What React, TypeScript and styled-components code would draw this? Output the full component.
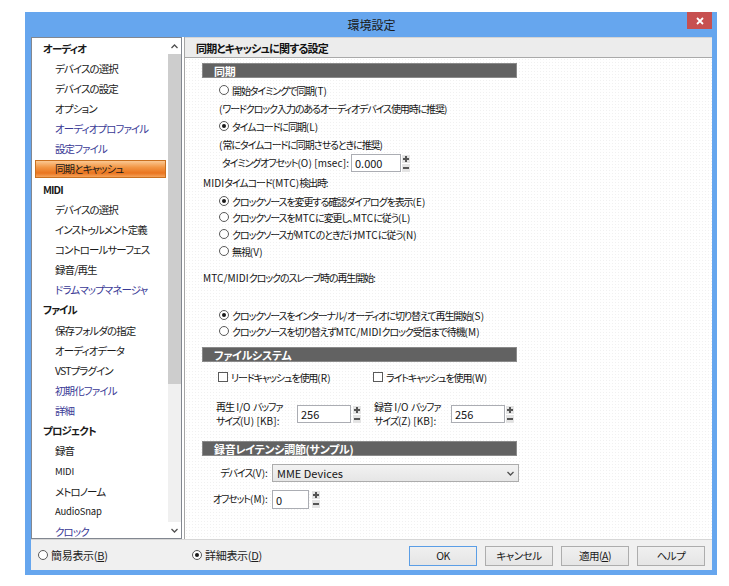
import React from 'react'
import styled, { createGlobalStyle } from 'styled-components'

const FONT = `"Noto Sans CJK JP", "Noto Sans", sans-serif`

const GlobalStyle = createGlobalStyle`
  html, body {
    margin: 0;
    padding: 0;
    background: #ffffff;
  }
  body {
    font-family: ${FONT};
    font-size: 11px;
    color: #1e1e1e;
    font-feature-settings: "palt";
    letter-spacing: -0.3px;
  }
`

const Page = styled.div`
  padding: 12px 0 0 25px;
`

const Window = styled.div`
  position: relative;
  width: 692px;
  height: 563px;
  box-sizing: border-box;
  background: #66a6ee;
  padding: 0 5px 5px 6px;
  display: flex;
  flex-direction: column;
`

const TitleBar = styled.div`
  height: 25px;
  display: flex;
  align-items: center;
  justify-content: center;
  font-size: 12px;
  color: #1a1a1a;
  letter-spacing: 0;
`

const CloseButton = styled.div`
  position: absolute;
  top: 0;
  right: 5px;
  width: 25px;
  height: 17px;
  background: #c75050;
  display: flex;
  align-items: center;
  justify-content: center;
`

const Client = styled.div`
  flex: 1;
  display: flex;
  flex-direction: column;
  background: #f0f0f0;
`

const Main = styled.div`
  height: 502px;
  display: flex;
  background: #ffffff;
`

const Sidebar = styled.div`
  width: 151px;
  box-sizing: border-box;
  border: 1px solid #828790;
  display: flex;
  overflow: hidden;
`

const NavList = styled.div`
  flex: 1;
  overflow: hidden;
`

type ItemProps = { $kind: 'head' | 'item' | 'link' | 'small'; $selected?: boolean }

const NavItem = styled.div`
  height: 20.15px;
  box-sizing: border-box;
  padding: 1px 2px 1px 3px;
`

const NavLabel = styled.div<ItemProps>`
  height: 100%;
  box-sizing: border-box;
  display: flex;
  align-items: center;
  padding-left: ${p => (p.$kind === 'head' ? 7 : 19)}px;
  font-weight: ${p => (p.$kind === 'head' ? 700 : 400)};
  font-size: ${p => (p.$kind === 'small' ? 9.5 : 10.5)}px;
  letter-spacing: ${p => (p.$kind === 'small' ? -0.2 : -0.9)}px;
  color: ${p => (p.$kind === 'link' ? '#3a3a96' : '#1a1a1a')};
  white-space: nowrap;
  border: 1px solid ${p => (p.$selected ? '#c9701f' : 'transparent')};
  background: ${p =>
    p.$selected
      ? 'linear-gradient(#fbc892 0%, #f29644 40%, #ea741f 75%, #f5a25a 100%)'
      : 'transparent'};
`

const ScrollBar = styled.div`
  width: 13px;
  display: flex;
  flex-direction: column;
  background: #f0f0f0;
`

const ScrollArrow = styled.div`
  height: 16px;
  display: flex;
  align-items: center;
  justify-content: center;
  background: #ffffff;
`

const ScrollThumb = styled.div`
  height: 330px;
  background: #cdcdcd;
`

const ScrollTrack = styled.div`
  flex: 1;
`

const Panel = styled.div`
  flex: 1;
  margin-left: 2px;
  border-left: 1px solid #a5a5a5;
  display: flex;
  flex-direction: column;
  background-color: #ffffff;
  background-image: radial-gradient(circle, #f1f1f1 0.7px, transparent 0.9px);
  background-size: 3px 3px;
`

const PanelHeader = styled.div`
  height: 21px;
  box-sizing: border-box;
  border-top: 1px solid #d4d4d4;
  border-bottom: 1px solid #a9a9a9;
  background: #ececec;
  display: flex;
  align-items: center;
  padding-left: 11px;
  font-size: 11px;
  letter-spacing: -0.8px;
  font-weight: 700;
  color: #111;
`

const Content = styled.div`
  padding-left: 17px;
  display: flex;
  flex-direction: column;
  font-size: 10px;
  letter-spacing: -1.1px;
  color: #141414;
`

const Latin = styled.span`
  letter-spacing: 0.1px;
`

const SectionBar = styled.div<{ $mt: number }>`
  margin-top: ${p => p.$mt}px;
  width: 315px;
  height: 15px;
  box-sizing: border-box;
  background: #626262;
  border: 1px solid #8a8a8a;
  color: #ffffff;
  font-weight: 700;
  font-size: 11px;
  letter-spacing: -0.3px;
  padding-left: 11px;
  display: flex;
  align-items: center;
`

const Row = styled.div<{ $h: number; $mt?: number; $in?: number }>`
  height: ${p => p.$h}px;
  margin-top: ${p => p.$mt ?? 0}px;
  padding-left: ${p => p.$in ?? 17}px;
  display: flex;
  align-items: center;
  white-space: nowrap;
`

const Option = styled.label<{ $w?: number }>`
  display: flex;
  align-items: center;
  gap: 3px;
  width: ${p => (p.$w ? `${p.$w}px` : 'auto')};
`

const RadioDot = styled.span<{ $on?: boolean }>`
  width: 10px;
  height: 10px;
  box-sizing: border-box;
  border-radius: 50%;
  border: 1px solid #5a5a5a;
  background: #ffffff;
  display: inline-flex;
  align-items: center;
  justify-content: center;
  flex-shrink: 0;
  &::after {
    content: '';
    width: 4px;
    height: 4px;
    border-radius: 50%;
    background: ${p => (p.$on ? '#1a1a1a' : 'transparent')};
  }
`

const CheckBox = styled.span`
  width: 10px;
  height: 10px;
  box-sizing: border-box;
  border: 1px solid #5a5a5a;
  background: #ffffff;
  flex-shrink: 0;
`

const FieldLabel = styled.div<{ $w: number; $right?: boolean; $ml?: number }>`
  width: ${p => p.$w}px;
  margin-left: ${p => p.$ml ?? 0}px;
  flex-shrink: 0;
  display: flex;
  flex-direction: column;
  align-items: ${p => (p.$right ? 'flex-end' : 'flex-start')};
  white-space: pre;
`

const LabelLine = styled.div`
  height: 14.5px;
  line-height: 14.5px;
  display: flex;
`

const TextBox = styled.div<{ $w: number; $h?: number; $ml?: number }>`
  width: ${p => p.$w}px;
  height: ${p => p.$h ?? 18}px;
  margin-left: ${p => p.$ml ?? 0}px;
  box-sizing: border-box;
  border: 1px solid #abadb3;
  background: #ffffff;
  padding-left: 3px;
  display: flex;
  align-items: center;
  font-size: 11px;
  letter-spacing: 0;
`

const Spin = styled.div<{ $ml: number }>`
  margin-left: ${p => p.$ml}px;
  width: 8px;
  height: 17px;
  display: flex;
  flex-direction: column;
  gap: 1px;
`

const SpinHalf = styled.div`
  flex: 1;
  background: #e4e4e4;
  display: flex;
  align-items: center;
  justify-content: center;
`

const Select = styled.div`
  margin-left: 4px;
  width: 247px;
  height: 18px;
  box-sizing: border-box;
  border: 1px solid #acacac;
  background: linear-gradient(#f2f2f2, #e6e6e6);
  display: flex;
  align-items: center;
  justify-content: space-between;
  padding: 0 4px 0 4px;
  font-size: 11px;
  letter-spacing: 0;
`

const Footer = styled.div`
  flex: 1;
  border-top: 1px solid #d6d6d6;
  display: flex;
  align-items: center;
  padding: 0 7px 0 7px;
`

const ButtonGroup = styled.div`
  margin-left: auto;
  display: flex;
  gap: 8px;
  padding-top: 1px;
`

const Button = styled.div<{ $default?: boolean }>`
  width: 68px;
  height: 20px;
  box-sizing: border-box;
  border: 1px solid ${p => (p.$default ? '#5b9ee6' : '#adadad')};
  background: linear-gradient(#f0f0f0, #e5e5e5);
  display: flex;
  align-items: center;
  justify-content: center;
  font-size: 10.5px;
  letter-spacing: -0.5px;
  color: #1a1a1a;
`

// ASCII runs keep normal spacing, Japanese runs stay condensed
const Txt = ({ s }: { s: string }) => (
  <>
    {s
      .split(/([\x20-\x7E]+)/)
      .filter(Boolean)
      .map((part, i) => (/^[\x20-\x7E]+$/.test(part) ? <Latin key={i}>{part}</Latin> : <span key={i}>{part}</span>))}
  </>
)

const Plus = () => (
  <svg width="6" height="6" viewBox="0 0 6 6">
    <rect x="0" y="2" width="6" height="2" fill="#555" />
    <rect x="2" y="0" width="2" height="6" fill="#555" />
  </svg>
)

const Minus = () => (
  <svg width="6" height="6" viewBox="0 0 6 6">
    <rect x="0" y="2" width="6" height="2" fill="#555" />
  </svg>
)

const Spinner = ({ ml }: { ml: number }) => (
  <Spin $ml={ml}>
    <SpinHalf>
      <Plus />
    </SpinHalf>
    <SpinHalf>
      <Minus />
    </SpinHalf>
  </Spin>
)

const Radio = ({ on, children, w }: { on?: boolean; children: React.ReactNode; w?: number }) => (
  <Option $w={w}>
    <RadioDot $on={on} />
    <span>{typeof children === 'string' ? <Txt s={children} /> : children}</span>
  </Option>
)

const Check = ({ children, w }: { children: string; w?: number }) => (
  <Option $w={w}>
    <CheckBox />
    <span>
      <Txt s={children} />
    </span>
  </Option>
)

const Label = ({ lines, w, right, ml }: { lines: string[]; w: number; right?: boolean; ml?: number }) => (
  <FieldLabel $w={w} $right={right} $ml={ml}>
    {lines.map(line => (
      <LabelLine key={line}>
        <Txt s={line} />
      </LabelLine>
    ))}
  </FieldLabel>
)

const Chevron = ({ up }: { up?: boolean }) => (
  <svg width="7" height="5" viewBox="0 0 7 5">
    <path
      d={up ? 'M0.5 4 L3.5 1 L6.5 4' : 'M0.5 1 L3.5 4 L6.5 1'}
      fill="none"
      stroke="#505050"
      strokeWidth="1.3"
    />
  </svg>
)

type NavEntry = { label: string; kind: ItemProps['$kind']; selected?: boolean }

const navItems: NavEntry[] = [
  { label: 'オーディオ', kind: 'head' },
  { label: 'デバイスの選択', kind: 'item' },
  { label: 'デバイスの設定', kind: 'item' },
  { label: 'オプション', kind: 'item' },
  { label: 'オーディオプロファイル', kind: 'link' },
  { label: '設定ファイル', kind: 'link' },
  { label: '同期とキャッシュ', kind: 'item', selected: true },
  { label: 'MIDI', kind: 'head' },
  { label: 'デバイスの選択', kind: 'item' },
  { label: 'インストゥルメント定義', kind: 'item' },
  { label: 'コントロールサーフェス', kind: 'item' },
  { label: '録音/再生', kind: 'item' },
  { label: 'ドラムマップマネージャ', kind: 'link' },
  { label: 'ファイル', kind: 'head' },
  { label: '保存フォルダの指定', kind: 'item' },
  { label: 'オーディオデータ', kind: 'item' },
  { label: 'VSTプラグイン', kind: 'item' },
  { label: '初期化ファイル', kind: 'link' },
  { label: '詳細', kind: 'link' },
  { label: 'プロジェクト', kind: 'head' },
  { label: '録音', kind: 'item' },
  { label: 'MIDI', kind: 'small' },
  { label: 'メトロノーム', kind: 'item' },
  { label: 'AudioSnap', kind: 'small' },
  { label: 'クロック', kind: 'link' },
]

const App = () => {
  return (
    <Page>
      <GlobalStyle />
      <Window>
        <TitleBar>環境設定</TitleBar>
        <CloseButton>
          <svg width="8" height="8" viewBox="0 0 8 8">
            <path d="M1 1 L7 7 M7 1 L1 7" stroke="#ffffff" strokeWidth="1.8" />
          </svg>
        </CloseButton>
        <Client>
          <Main>
            <Sidebar>
              <NavList>
                {navItems.map((item, i) => (
                  <NavItem key={i}>
                    <NavLabel $kind={item.kind} $selected={item.selected}>
                      {item.label}
                    </NavLabel>
                  </NavItem>
                ))}
              </NavList>
              <ScrollBar>
                <ScrollArrow>
                  <Chevron up />
                </ScrollArrow>
                <ScrollThumb />
                <ScrollTrack />
                <ScrollArrow>
                  <Chevron />
                </ScrollArrow>
              </ScrollBar>
            </Sidebar>
            <Panel>
              <PanelHeader>同期とキャッシュに関する設定</PanelHeader>
              <Content>
                <SectionBar $mt={5}>同期</SectionBar>
                <Row $mt={2} $h={20}>
                  <Radio>開始タイミングで同期(T)</Radio>
                </Row>
                <Row $h={16}>
                  <Txt s="(ワードクロック入力のあるオーディオデバイス使用時に推奨)" />
                </Row>
                <Row $h={20}>
                  <Radio on>タイムコードに同期(L)</Radio>
                </Row>
                <Row $h={16}>
                  <Txt s="(常にタイムコードに同期させるときに推奨)" />
                </Row>
                <Row $mt={2} $h={18} $in={20}>
                  <Label w={129} lines={['タイミングオフセット(O) [msec]:']} />
                  <TextBox $w={50}>0.000</TextBox>
                  <Spinner ml={1} />
                </Row>
                <Row $mt={1} $h={18} $in={1}>
                  <Txt s="MIDIタイムコード(MTC)検出時:" />
                </Row>
                <Row $mt={2} $h={16}>
                  <Radio on>クロックソースを変更する確認ダイアログを表示(E)</Radio>
                </Row>
                <Row $h={16}>
                  <Radio>クロックソースをMTCに変更し、MTCに従う(L)</Radio>
                </Row>
                <Row $h={18}>
                  <Radio>クロックソースがMTCのときだけMTCに従う(N)</Radio>
                </Row>
                <Row $h={16}>
                  <Radio>無視(V)</Radio>
                </Row>
                <Row $mt={9} $h={18} $in={1}>
                  <Txt s="MTC/MIDIクロックのスレーブ時の再生開始:" />
                </Row>
                <Row $mt={20} $h={18}>
                  <Radio on>クロックソースをインターナル/オーディオに切り替えて再生開始(S)</Radio>
                </Row>
                <Row $h={14}>
                  <Radio>クロックソースを切り替えずMTC/MIDIクロック受信まで待機(M)</Radio>
                </Row>

                <SectionBar $mt={9}>ファイルシステム</SectionBar>
                <Row $mt={6} $h={18} $in={16}>
                  <Check w={155}>リードキャッシュを使用(R)</Check>
                  <Check>ライトキャッシュを使用(W)</Check>
                </Row>
                <Row $mt={16} $h={24} $in={14}>
                  <Label w={81} lines={['再生 I/O バッファ', 'サイズ(U) [KB]:']} />
                  <TextBox $w={54}>256</TextBox>
                  <Spinner ml={2} />
                  <Label w={77} ml={13} lines={['録音 I/O バッファ', 'サイズ(Z) [KB]:']} />
                  <TextBox $w={54}>256</TextBox>
                  <Spinner ml={1} />
                </Row>

                <SectionBar $mt={15}>録音レイテンシ調節(サンプル)</SectionBar>
                <Row $mt={8} $h={18} $in={13}>
                  <Label w={53} right lines={['デバイス(V):']} />
                  <Select>
                    <span>MME Devices</span>
                    <Chevron />
                  </Select>
                </Row>
                <Row $mt={8} $h={19} $in={13}>
                  <Label w={53} right lines={['オフセット(M):']} />
                  <TextBox $w={37} $h={19} $ml={4}>
                    0
                  </TextBox>
                  <Spinner ml={3} />
                </Row>
              </Content>
            </Panel>
          </Main>
          <Footer>
            <Radio w={154}>
              簡易表示(<u>B</u>)
            </Radio>
            <Radio on>
              詳細表示(<u>D</u>)
            </Radio>
            <ButtonGroup>
              <Button $default>OK</Button>
              <Button>キャンセル</Button>
              <Button>
                適用(<u>A</u>)
              </Button>
              <Button>ヘルプ</Button>
            </ButtonGroup>
          </Footer>
        </Client>
      </Window>
    </Page>
  )
}

export default App
